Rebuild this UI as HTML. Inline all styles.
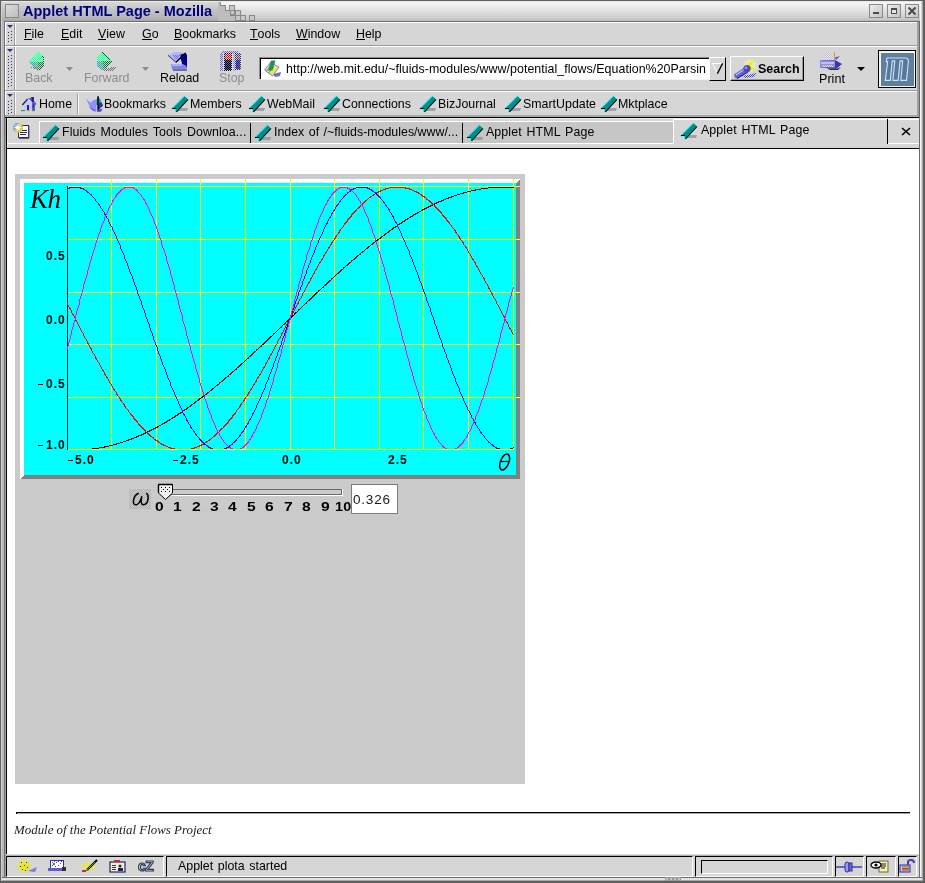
<!DOCTYPE html>
<html><head><meta charset="utf-8">
<style>
*{box-sizing:border-box}
html,body{margin:0;padding:0}
body{width:925px;height:883px;position:relative;overflow:hidden;background:#c8c8c8;font-family:"Liberation Sans",sans-serif;font-size:12px;color:#000}
.a{position:absolute}
.t{position:absolute;white-space:nowrap;line-height:1;will-change:transform}
u{text-decoration:none;border-bottom:1px solid #000;display:inline-block;line-height:10px;vertical-align:top;margin-top:1px}
</style></head><body>
<!-- outer window borders -->
<div class="a" style="left:0;top:0;width:925px;height:1px;background:#606060"></div>
<div class="a" style="left:0;top:0;width:1px;height:883px;background:#606060"></div>
<div class="a" style="left:1px;top:1px;width:923px;height:1px;background:#e8e8e8"></div>
<div class="a" style="left:1px;top:1px;width:1px;height:881px;background:#d0d0d0"></div>
<div class="a" style="left:2px;top:2px;width:918px;height:19px;background:linear-gradient(#f6f6f6,#e4e4e4 40%,#cccccc 85%,#bcbcbc)"></div>
<div class="a" style="left:2px;top:2px;width:218px;height:19px;background:linear-gradient(#d8d8d8,#c4c4c4 40%,#b4b4b4 85%,#a8a8a8)"></div>
<svg class="a" style="left:218px;top:2px" width="40" height="19" viewBox="218 2 40 19" shape-rendering="crispEdges">
<polygon points="218,2 220,2 220,5 225,5 225,10 230,10 230,15 235,15 235,21 218,21" fill="#bdbdbd"/>
<path d="M220.5 2V5.5H225.5V10.5H230.5V15.5H235.5V21" stroke="#888" fill="none"/>
<g fill="#c8c8c8" stroke="#8a8a8a"><rect x="229.5" y="5.5" width="5" height="5"/><rect x="230.5" y="10.5" width="4" height="4"/><rect x="235.5" y="10.5" width="5" height="5"/><rect x="235.5" y="15.5" width="5" height="5"/><rect x="240.5" y="15.5" width="5" height="5"/><rect x="249.5" y="15.5" width="5" height="5"/></g>
</svg>
<div class="a" style="left:2px;top:21px;width:2px;height:856px;background:#b8b8b8"></div>
<div class="a" style="left:4px;top:21px;width:1px;height:856px;background:#707070"></div>
<div class="a" style="left:5px;top:21px;width:1px;height:856px;background:#a0a0a0"></div>
<div class="a" style="left:923px;top:0;width:2px;height:883px;background:#606060"></div>
<div class="a" style="left:919px;top:21px;width:1px;height:856px;background:#6a6a6a"></div>
<div class="a" style="left:920px;top:1px;width:1px;height:877px;background:#f4f4f4"></div>
<div class="a" style="left:921px;top:1px;width:1px;height:877px;background:#d4d4d4"></div>
<div class="a" style="left:922px;top:1px;width:1px;height:880px;background:#a8a8a8"></div>
<div class="a" style="left:0;top:881px;width:925px;height:2px;background:#606060"></div>
<div class="a" style="left:2px;top:877px;width:920px;height:1px;background:#6a6a6a"></div>
<div class="a" style="left:2px;top:878px;width:920px;height:2px;background:#e4e4e4"></div>
<div class="a" style="left:2px;top:880px;width:920px;height:1px;background:#a8a8a8"></div>

<!-- title bar -->
<div class="a" style="left:5px;top:4px;width:14px;height:14px;border:1px solid #888;background:linear-gradient(135deg,#dcdcdc,#bcbcbc)"></div>
<div class="t" style="left:22.5px;top:4px;font-size:14.5px;font-weight:bold;color:#000080">Applet HTML Page - Mozilla</div>
<div class="a" style="left:869px;top:4px;width:14px;height:14px;border:1px solid #8a8a8a;background:linear-gradient(135deg,#ececec,#c4c4c4)"></div>
<div class="a" style="left:887px;top:4px;width:14px;height:14px;border:1px solid #8a8a8a;background:linear-gradient(135deg,#ececec,#c4c4c4)"></div>
<div class="a" style="left:905px;top:4px;width:14px;height:14px;border:1px solid #8a8a8a;background:linear-gradient(135deg,#ececec,#c4c4c4)"></div>
<svg class="a" style="left:864px;top:0" width="61" height="22" viewBox="864 0 61 22" shape-rendering="crispEdges">
<rect x="873" y="12" width="6" height="2" fill="#4a4a4a"/>
<rect x="891" y="8" width="6" height="6" fill="#4a4a4a"/><rect x="892" y="10" width="4" height="3" fill="#e8e8e8"/>
<path d="M908.5 7.5L915.5 14.5M915.5 7.5L908.5 14.5" stroke="#4a4a4a" stroke-width="2" shape-rendering="auto"/>
</svg>
<!-- toolbox background -->
<div class="a" style="left:4px;top:21px;width:915px;height:96px;background:#d6d6d6"></div>
<div class="a" style="left:4px;top:21px;width:916px;height:1px;background:#6c6c6c"></div>
<div class="a" style="left:4px;top:21px;width:1px;height:96px;background:#707070"></div>
<div class="a" style="left:5px;top:22px;width:1px;height:95px;background:#fff"></div>
<div class="a" style="left:14px;top:22px;width:1px;height:95px;background:#9a9a9a"></div>
<div class="a" style="left:15px;top:22px;width:1px;height:95px;background:#fff"></div>
<div class="a" style="left:5px;top:22px;width:913px;height:1px;background:#fff"></div>
<div class="a" style="left:5px;top:45px;width:913px;height:1px;background:#9a9a9a"></div>
<div class="a" style="left:5px;top:46px;width:913px;height:1px;background:#fff"></div>
<div class="a" style="left:5px;top:90px;width:913px;height:1px;background:#9a9a9a"></div>
<div class="a" style="left:5px;top:91px;width:913px;height:1px;background:#fff"></div>
<div class="a" style="left:5px;top:115px;width:913px;height:2px;background:#a8a8a8"></div>
<div class="a" style="left:917px;top:22px;width:2px;height:95px;background:#a0a0a0"></div>
<!-- grippies -->
<svg class="a" style="left:6px;top:23px" width="8" height="92" viewBox="0 0 8 92">
<g fill="#2a2a70">
<path d="M1 2h6l-3 3z"/>
<path d="M1 26h6l-3 3z"/>
<path d="M1 71h6l-3 3z"/>
</g>
<g fill="#303070">
<rect x="5" y="8" width="1" height="1"/><rect x="2" y="9" width="1" height="1"/><rect x="5" y="11" width="1" height="1"/><rect x="2" y="12" width="1" height="1"/><rect x="5" y="14" width="1" height="1"/><rect x="2" y="15" width="1" height="1"/><rect x="5" y="17" width="1" height="1"/><rect x="2" y="18" width="1" height="1"/>
<rect x="5" y="32" width="1" height="1"/><rect x="2" y="33" width="1" height="1"/><rect x="5" y="35" width="1" height="1"/><rect x="2" y="36" width="1" height="1"/><rect x="5" y="38" width="1" height="1"/><rect x="2" y="39" width="1" height="1"/><rect x="5" y="41" width="1" height="1"/><rect x="2" y="42" width="1" height="1"/><rect x="5" y="44" width="1" height="1"/><rect x="2" y="45" width="1" height="1"/><rect x="5" y="47" width="1" height="1"/><rect x="2" y="48" width="1" height="1"/><rect x="5" y="50" width="1" height="1"/><rect x="2" y="51" width="1" height="1"/><rect x="5" y="53" width="1" height="1"/><rect x="2" y="54" width="1" height="1"/><rect x="5" y="56" width="1" height="1"/><rect x="2" y="57" width="1" height="1"/><rect x="5" y="59" width="1" height="1"/><rect x="2" y="60" width="1" height="1"/><rect x="5" y="62" width="1" height="1"/><rect x="2" y="63" width="1" height="1"/>
<rect x="5" y="77" width="1" height="1"/><rect x="2" y="78" width="1" height="1"/><rect x="5" y="80" width="1" height="1"/><rect x="2" y="81" width="1" height="1"/><rect x="5" y="83" width="1" height="1"/><rect x="2" y="84" width="1" height="1"/><rect x="5" y="86" width="1" height="1"/><rect x="2" y="87" width="1" height="1"/><rect x="5" y="89" width="1" height="1"/><rect x="2" y="90" width="1" height="1"/>
</g>
</svg>
<!-- menu items -->
<div class="t" style="left:24px;top:28px;font-size:12.4px"><u>F</u>ile</div>
<div class="t" style="left:61px;top:28px;font-size:12.4px"><u>E</u>dit</div>
<div class="t" style="left:98px;top:28px;font-size:12.4px"><u>V</u>iew</div>
<div class="t" style="left:142px;top:28px;font-size:12.4px"><u>G</u>o</div>
<div class="t" style="left:174px;top:28px;font-size:12.4px"><u>B</u>ookmarks</div>
<div class="t" style="left:250px;top:28px;font-size:12.4px"><u>T</u>ools</div>
<div class="t" style="left:296px;top:28px;font-size:12.4px"><u>W</u>indow</div>
<div class="t" style="left:356px;top:28px;font-size:12.4px"><u>H</u>elp</div>

<!-- nav toolbar -->
<svg width="0" height="0" style="position:absolute"><defs>
<pattern id="chkp" patternUnits="userSpaceOnUse" width="2" height="2"><rect x="0" y="0" width="1" height="1" fill="#fff"/><rect x="1" y="1" width="1" height="1" fill="#fff"/></pattern>
<pattern id="chkq" patternUnits="userSpaceOnUse" width="2" height="2"><rect x="1" y="0" width="1" height="1" fill="#fff"/><rect x="0" y="1" width="1" height="1" fill="#fff"/></pattern>
<mask id="chk" maskUnits="userSpaceOnUse" x="0" y="0" width="925" height="883"><rect x="0" y="0" width="925" height="883" fill="url(#chkp)"/></mask>
<mask id="chk2" maskUnits="userSpaceOnUse" x="0" y="0" width="925" height="883"><rect x="0" y="0" width="925" height="883" fill="url(#chkq)"/></mask>
</defs></svg>
<svg class="a" style="left:24px;top:48px" width="28" height="26" viewBox="24 48 28 26" shape-rendering="crispEdges">
<g mask="url(#chk)">
<polygon points="38.6,51 44,56.8 44,62 28,62" fill="#40ffa0"/>
<polygon points="28,62 38,62 38,71 37.7,70.6" fill="#40a8b8"/>
<polygon points="38,62 44,62 44,66.3 38.7,70.6" fill="#008000"/>
<polygon points="38.6,51 44,56.8 44,66.3 38.7,70.6 39.5,69 43,65.5 43,57.5" fill="#005050"/>
<polygon points="30,67 41,67 38,70" fill="#707070"/>
</g>
<g mask="url(#chk2)"><polygon points="38.6,51 44,56.8 44,62 28,62" fill="#90f8c0"/><polygon points="28,62 38,62 38,71" fill="#a0d0d8"/></g>
</svg>
<svg class="a" style="left:65px;top:66px" width="9" height="6" viewBox="0 0 9 6"><polygon points="1,1 8,1 4.5,5" fill="#8c8c8c"/></svg>
<div class="t" style="left:25px;top:72px;font-size:12.4px;color:#8c8c8c">Back</div>
<svg class="a" style="left:94px;top:48px" width="26" height="26" viewBox="94 48 26 26" shape-rendering="crispEdges">
<g mask="url(#chk)">
<polygon points="102.4,51 113,61.4 97,61.4 97,57.2" fill="#40ffa0"/>
<polygon points="97,61.4 103,61.4 103,70.6 97,66.3" fill="#40a8b8"/>
<polygon points="103,61.4 113,61.4 103.3,70.6" fill="#008000"/>
<polygon points="102.4,51 113,61.4 103.3,70.6 103,69 111.5,61.4 102,52.5" fill="#005050"/>
<polygon points="104,68 116,67 112,71 103,71" fill="#707070"/>
</g>
<g mask="url(#chk2)"><polygon points="102.4,51 113,61.4 97,61.4 97,57.2" fill="#90f8c0"/><polygon points="97,61.4 103,61.4 103,70.6 97,66.3" fill="#a0d0d8"/></g>
</svg>
<svg class="a" style="left:141px;top:66px" width="9" height="6" viewBox="0 0 9 6"><polygon points="1,1 8,1 4.5,5" fill="#8c8c8c"/></svg>
<div class="t" style="left:84px;top:72px;font-size:12.4px;color:#8c8c8c">Forward</div>
<svg class="a" style="left:164px;top:48px" width="32" height="26" viewBox="164 48 32 26">
<polygon points="168,55.3 174.2,52 183,52 176,62.3" fill="#b4b4f8"/>
<g mask="url(#chk)"><polygon points="172,55 182,55 176,60" fill="#7070e0"/></g>
<polyline points="168,55.3 176,62.3 185.5,53" stroke="#3030a0" stroke-width="1" fill="none"/>
<polygon points="180.5,54.5 185.5,53 187,55 187,67.5 183,67.5 180.5,58" fill="#000090"/>
<polygon points="171,64 183,64 186.5,66 186.5,69.5 172,69.5" fill="#8080f0"/>
<rect x="172" y="64" width="10" height="2" fill="#b0b0ff"/>
<rect x="173" y="69.5" width="14" height="1.2" fill="#404060"/>
<path d="M176 62.3L185.5 53" stroke="#000" stroke-width="1.2"/>
</svg>
<div class="t" style="left:160px;top:72px;font-size:12.4px">Reload</div>
<svg class="a" style="left:218px;top:50px" width="24" height="22" viewBox="218 50 24 22" shape-rendering="crispEdges">
<g mask="url(#chk)">
<rect x="222" y="51" width="16" height="2" fill="#6a6ad8"/>
<rect x="220" y="53" width="3" height="18" fill="#6a6ad8"/>
<rect x="224" y="53" width="8" height="18" fill="#000"/>
<rect x="225" y="54" width="6" height="5" fill="#ff0000"/>
<rect x="233" y="53" width="2" height="18" fill="#8a8ae8"/>
<rect x="235" y="53" width="6" height="17" fill="#28287a"/>
<rect x="236" y="55" width="3" height="3" fill="#d00000"/>
</g>
<g mask="url(#chk2)">
<rect x="225" y="60" width="6" height="10" fill="#5050a8"/>
<rect x="236" y="60" width="4" height="9" fill="#6060c0"/>
</g>
</svg>
<div class="t" style="left:219px;top:72px;font-size:12.4px;color:#8c8c8c">Stop</div>
<!-- url box -->
<div class="a" style="left:259px;top:57px;width:450px;height:23px;background:#fff;border-top:1px solid #8c8c8c;border-left:1px solid #8c8c8c;border-bottom:1px solid #f4f4f4"></div>
<div class="a" style="left:260px;top:58px;width:449px;height:1px;background:#000"></div>
<div class="a" style="left:260px;top:58px;width:1px;height:21px;background:#000"></div>
<svg class="a" style="left:262px;top:59px" width="22" height="20" viewBox="262 59 22 20">
<polygon points="273,74 281,72 280,76 275,77" fill="#7070b0"/>
<polygon points="264.5,70 270.5,62.5 279,67 272.5,76" fill="#e8e880" stroke="#7a7af0" stroke-width="1"/>
<path d="M267 70L272 64M269 72L274 66M271 74L276 68" stroke="#f0f000" stroke-width="1.2"/>
<path d="M266.5 71L271.5 65M268.5 73L273.5 67" stroke="#5050c0" stroke-width="0.7"/>
<polygon points="271,60.5 275.5,60.5 272.5,70.5 268,70.5" fill="#209060"/>
</svg>
<div class="t" style="left:286px;top:62px;font-size:12.4px;width:421px;height:16px;overflow:hidden;line-height:14px;letter-spacing:0.05px">http://web.mit.edu/~fluids-modules/www/potential_flows/Equation%20Parsin</div>
<!-- dropdown -->
<div class="a" style="left:709px;top:57px;width:17px;height:24px;background:#d6d6d6;border-top:1px solid #fff;border-left:1px solid #fff;border-right:1px solid #000;border-bottom:1px solid #000"></div>
<svg class="a" style="left:704px;top:52px" width="28" height="32" viewBox="704 52 28 32">
<path d="M712.5 63.5H722M712.5 63.5L717.5 73" stroke="#fff" stroke-width="1" fill="none"/>
<path d="M722.6 63.4L717.4 73.6" stroke="#000" stroke-width="1.3" fill="none"/>
</svg>
<!-- search button -->
<div class="a" style="left:730px;top:56px;width:74px;height:25px;background:#d6d6d6;border-top:1px solid #fff;border-left:1px solid #fff;border-right:1px solid #000;border-bottom:1px solid #000;box-shadow:inset -1px -1px 0 #9a9a9a"></div>
<svg class="a" style="left:730px;top:57px" width="30" height="23" viewBox="730 57 30 23">
<g mask="url(#chk)"><circle cx="750" cy="66" r="6.5" fill="#f8f8a0"/></g>
<polygon points="748,63 754,60 751,66 755,70 749,70" fill="#f0f000"/>
<g mask="url(#chk)"><polygon points="742,76 757,73 754,77 745,78" fill="#4040d0"/></g>
<polygon points="734,74.5 744.5,67.5 748.5,72 738,78.5 735,78" fill="#6060d8"/>
<path d="M736 75L745 69" stroke="#b8b8ff" stroke-width="1.2"/>
<path d="M737 78.5L748 72" stroke="#202070" stroke-width="1"/>
<circle cx="747" cy="68.7" r="3.6" fill="#4848b8"/>
<circle cx="746" cy="67.7" r="1.5" fill="#9090f0"/>
</svg>
<div class="t" style="left:758px;top:63px;font-size:12.5px;font-weight:bold">Search</div>
<!-- print -->
<svg class="a" style="left:814px;top:48px" width="36" height="26" viewBox="814 48 36 26">
<rect x="825" y="52" width="10" height="8" fill="#f8f8c0"/>
<g mask="url(#chk)"><rect x="825" y="52" width="10" height="8" fill="#b0b0f0"/></g>
<rect x="834" y="52" width="1" height="8" fill="#e09040"/>
<polygon points="835,57.5 840,56 836,60" fill="#5050c8"/>
<polygon points="820,60.5 835,60 842,64 836,69 820,67.5" fill="#3838a8"/>
<polygon points="820,60.5 835,60.5 835,67.5 820,67.5" fill="#8c8cf0"/>
<rect x="821" y="62" width="13" height="2" fill="#c0c0ff"/>
<g mask="url(#chk)"><rect x="822" y="65" width="11" height="2" fill="#f0f080"/></g>
<polygon points="827,68 836,69 841,67 838,70 830,70" fill="#303040"/>
</svg>
<div class="t" style="left:819px;top:73px;font-size:12.6px">Print</div>
<svg class="a" style="left:856px;top:66px" width="10" height="6" viewBox="0 0 10 6"><polygon points="1,1 9,1 5,5" fill="#000"/></svg>
<!-- M logo -->
<svg class="a" style="left:876px;top:48px" width="44" height="42" viewBox="876 48 44 42">
<rect x="878" y="50" width="38" height="38" fill="#000"/>
<rect x="879" y="51" width="36" height="36" fill="#f4f4f4"/>
<rect x="881" y="53" width="33" height="33" fill="#5f7f9f"/>
<path d="M887 58H905Q908.5 58 908.4 61.5L906.5 80.4H900.8L902.7 60.9H900.1L898.1 80.4H892.9L894.8 60.9H892.2L890.3 80.4H885.3L887.7 61.6H886.2Z" fill="#587898" stroke="#c8e4ff" stroke-width="1.1"/>
</svg>

<svg width="0" height="0" style="position:absolute">
<defs>
<g id="pen">
<polygon points="9,16 20,16 19,19 10,19" fill="#8a8a8a" opacity=".7"/>
<polygon points="16.5,4 20,7.5 8.5,20 7,20 7,16.5 4,16.5" fill="#008c8c"/>
<polyline points="4,16.5 16.5,4" stroke="#00ffff" stroke-width="1" fill="none"/>
<polyline points="7.5,17 7.5,20" stroke="#00ffff" stroke-width="1" fill="none"/>
<polyline points="20,7.5 8.5,20" stroke="#000" stroke-width="1.1" fill="none"/>
<polyline points="4,16.5 8,16.5" stroke="#000" stroke-width="1.1" fill="none"/>
</g>
</defs>
</svg>
<!-- home -->
<svg class="a" style="left:16px;top:92px" width="24" height="24" viewBox="16 92 24 24">
<polygon points="27.5,98 32,98 36.5,104 35,105.5 35,111 32,111 32,103" fill="#5858d0"/>
<polygon points="31,97 34,97 34,102 31,101" fill="#4040b0"/>
<rect x="32" y="97" width="1.5" height="5" fill="#202070"/>
<polygon points="24,104.5 28.5,100 32,103.5 32,111 24,111" fill="#c8c8ff"/>
<polygon points="22,104.5 27.5,98 28.5,99 23,105.5" fill="#9090e8"/>
<path d="M22.3 105L27.6 99.2" stroke="#202068" stroke-width="1.2"/>
<path d="M28 98.6L32 102.6" stroke="#fff" stroke-width="1"/>
<rect x="27" y="105" width="2" height="5.5" fill="#202090"/>
<rect x="33" y="104.5" width="1" height="3" fill="#303030"/>
<rect x="21" y="110" width="4" height="1.2" fill="#20a040"/>
<rect x="27" y="110" width="2.5" height="1.2" fill="#e09030"/>
<rect x="32" y="110" width="1" height="1.2" fill="#20a040"/><rect x="34" y="110" width="1" height="1.2" fill="#20a040"/>
</svg>
<div class="t" style="left:39px;top:98px;font-size:12.4px">Home</div>
<div class="a" style="left:77px;top:94px;width:1px;height:20px;background:#9a9a9a"></div>
<div class="a" style="left:78px;top:94px;width:1px;height:20px;background:#fff"></div>
<svg class="a" style="left:84px;top:94px" width="20" height="20" viewBox="84 94 20 20">
<polygon points="86,99 88,99.5 91,101.5 93,100.5 95.5,99.5 96.5,100 96.5,111.5 94,111 90,108 88.5,104" fill="#9090f8"/>
<polygon points="86,99 88,99.5 91,101.5 93,100.5 91,102.5 88.5,101" fill="#e0e0ff"/>
<polygon points="89,107 94,109.5 96.5,111.5 93,111" fill="#6060d0"/>
<polygon points="96.5,99.5 98.2,96 100,99.5 101.2,100 98.2,105 96.5,105" fill="#108c8c"/>
<polygon points="98,104 101,101.5 103.2,105.5 99.5,109 98,110.5" fill="#30309a"/>
<path d="M98 96.2V110.5" stroke="#000" stroke-width="1.3"/>
<polygon points="98,110 102.5,108.5 101,111.5 97,112" fill="#4040b0"/>
</svg>
<div class="t" style="left:104px;top:98px;font-size:12.4px">Bookmarks</div>
<svg class="a" style="left:168px;top:92px" width="24" height="24"><use href="#pen"/></svg>
<div class="t" style="left:190px;top:98px;font-size:12.4px">Members</div>
<svg class="a" style="left:245px;top:92px" width="24" height="24"><use href="#pen"/></svg>
<div class="t" style="left:267px;top:98px;font-size:12.4px">WebMail</div>
<svg class="a" style="left:320px;top:92px" width="24" height="24"><use href="#pen"/></svg>
<div class="t" style="left:342px;top:98px;font-size:12.4px">Connections</div>
<svg class="a" style="left:416px;top:92px" width="24" height="24"><use href="#pen"/></svg>
<div class="t" style="left:438px;top:98px;font-size:12.4px">BizJournal</div>
<svg class="a" style="left:501px;top:92px" width="24" height="24"><use href="#pen"/></svg>
<div class="t" style="left:523px;top:98px;font-size:12.4px">SmartUpdate</div>
<svg class="a" style="left:597px;top:92px" width="24" height="24"><use href="#pen"/></svg>
<div class="t" style="left:618px;top:98px;font-size:12.4px">Mktplace</div>

<!-- tab bar -->
<div class="a" style="left:5px;top:117px;width:914px;height:1px;background:#000"></div>
<div class="a" style="left:6px;top:117px;width:1px;height:737px;background:#000"></div>
<div class="a" style="left:7px;top:118px;width:912px;height:30px;background:#d6d6d6"></div>
<div class="a" style="left:6px;top:148px;width:913px;height:1px;background:#000"></div>
<div class="a" style="left:7px;top:118px;width:1px;height:30px;background:#e8e8e8"></div>
<div class="a" style="left:7px;top:118px;width:912px;height:1px;background:#e8e8e8"></div>
<div class="a" style="left:7px;top:143px;width:666px;height:1px;background:#fff"></div>
<div class="a" style="left:887px;top:143px;width:32px;height:1px;background:#fff"></div>
<!-- new tab icon -->
<svg class="a" style="left:10px;top:120px" width="22" height="22" viewBox="10 120 22 22">
<rect x="18.5" y="125.5" width="10" height="12" fill="#fff" stroke="#2a2a60" stroke-width="1"/>
<rect x="28.5" y="126" width="1" height="12" fill="#5a5a80"/>
<rect x="19" y="138" width="10" height="1" fill="#5a5a80"/>
<path d="M20 130.5H27M20 132.5H27M20 134.5H26" stroke="#2a2a70" stroke-width="1"/>
<circle cx="18" cy="127.8" r="5" fill="#e0c840"/>
<path d="M18 122.8A5 5 0 0 0 14.5 131.3L18 127.8Z" fill="#7aa8f0"/>
<circle cx="17.8" cy="127.6" r="1.8" fill="#fff"/>
<path d="M17.8 124V131.2M14.2 127.6H21.4M15.3 125.1L20.3 130.1M20.3 125.1L15.3 130.1" stroke="#fff" stroke-width="0.9"/>
</svg>
<!-- unselected tabs -->
<div class="a" style="left:39px;top:121px;width:634px;height:1px;background:#fff"></div>
<div class="a" style="left:39px;top:121px;width:1px;height:23px;background:#fff"></div>
<div class="a" style="left:40px;top:122px;width:633px;height:21px;background:#c6c6c6"></div>
<div class="a" style="left:250px;top:123px;width:1px;height:20px;background:#000"></div>
<div class="a" style="left:462px;top:123px;width:1px;height:20px;background:#000"></div>
<svg class="a" style="left:39px;top:121px" width="24" height="24"><use href="#pen"/></svg>
<div class="t" style="left:62px;top:126px;font-size:12.4px;word-spacing:1.3px;letter-spacing:0.1px">Fluids Modules Tools Downloa...</div>
<svg class="a" style="left:251px;top:121px" width="24" height="24"><use href="#pen"/></svg>
<div class="t" style="left:274px;top:126px;font-size:12.4px;word-spacing:1px;letter-spacing:0px">Index of /~fluids-modules/www/...</div>
<svg class="a" style="left:463px;top:121px" width="24" height="24"><use href="#pen"/></svg>
<div class="t" style="left:486px;top:126px;font-size:12.4px;word-spacing:1.3px;letter-spacing:0.1px">Applet HTML Page</div>
<!-- selected tab -->
<div class="a" style="left:673px;top:119px;width:214px;height:1px;background:#fff"></div>
<div class="a" style="left:673px;top:119px;width:1px;height:25px;background:#fff"></div>
<div class="a" style="left:674px;top:120px;width:213px;height:27px;background:#d6d6d6"></div>
<div class="a" style="left:887px;top:119px;width:1px;height:25px;background:#000"></div>
<div class="a" style="left:888px;top:119px;width:31px;height:1px;background:#fff"></div>
<svg class="a" style="left:677px;top:119px" width="24" height="24"><use href="#pen"/></svg>
<div class="t" style="left:701px;top:124px;font-size:12.4px;word-spacing:1.3px;letter-spacing:0.1px">Applet HTML Page</div>
<svg class="a" style="left:901px;top:127px" width="10" height="9" viewBox="0 0 10 9"><path d="M1 1L9 8M9 1L1 8" stroke="#000" stroke-width="1.6"/></svg>

<!-- content -->
<div class="a" style="left:7px;top:149px;width:912px;height:705px;background:#fff"></div>
<svg class="a" style="left:15px;top:174px" width="510" height="610" viewBox="15 174 510 610" shape-rendering="crispEdges">
<defs><pattern id="strp" patternUnits="userSpaceOnUse" x="0" y="0" width="4" height="2"><rect x="0" y="0" width="4" height="1" fill="#cdcdcd"/><rect x="0" y="1" width="4" height="1" fill="#c8c8c8"/></pattern><clipPath id="pc"><rect x="67" y="186" width="447" height="264"/></clipPath></defs>
<rect x="15" y="174" width="510" height="610" fill="url(#strp)"/>
<polygon points="20,179 520,179 516,183 24,183 24,475 20,479" fill="#ffffff"/>
<polygon points="520,179 520,479 20,479 24,475 516,475 516,183" fill="#808080"/>
<rect x="24" y="183" width="492" height="292" fill="#00ffff"/>
<g stroke="#ffff00" stroke-width="1">
<path d="M111.5 179V449M156.5 179V449M200.5 179V449M245.5 179V449M290.5 179V449M334.5 179V449M379.5 179V449M423.5 179V449M468.5 179V449M513.5 179V449"/>
<path d="M67 186.5H520M67 239.5H520M67 292.5H520M67 344.5H520M67 397.5H520M67 449.5H514"/>
</g>
<path d="M67.5 186V450" stroke="#000" stroke-width="1"/>
<g clip-path="url(#pc)" shape-rendering="crispEdges">
<path fill="#000000" d="M92 448h1v1h-1zM93 448h1v1h-1zM94 448h1v1h-1zM95 448h1v1h-1zM96 448h1v1h-1zM97 448h1v1h-1zM98 448h1v1h-1zM99 447h1v1h-1zM100 447h1v1h-1zM101 447h1v1h-1zM102 447h1v1h-1zM103 447h1v1h-1zM104 446h1v2h-1zM105 446h1v1h-1zM106 446h1v1h-1zM107 446h1v1h-1zM108 446h1v1h-1zM109 445h1v1h-1zM110 445h1v1h-1zM111 445h1v1h-1zM112 445h1v1h-1zM113 444h1v1h-1zM114 444h1v1h-1zM115 444h1v1h-1zM116 443h1v2h-1zM117 443h1v1h-1zM118 443h1v1h-1zM119 443h1v1h-1zM120 442h1v1h-1zM121 442h1v1h-1zM122 442h1v1h-1zM123 441h1v1h-1zM124 441h1v1h-1zM125 441h1v1h-1zM126 440h1v1h-1zM127 440h1v1h-1zM128 439h1v2h-1zM129 439h1v1h-1zM130 439h1v1h-1zM131 438h1v2h-1zM132 438h1v1h-1zM133 438h1v1h-1zM134 437h1v1h-1zM135 437h1v1h-1zM136 436h1v2h-1zM137 436h1v1h-1zM138 435h1v2h-1zM139 435h1v1h-1zM140 435h1v1h-1zM141 434h1v2h-1zM142 434h1v1h-1zM143 433h1v2h-1zM144 433h1v1h-1zM145 432h1v2h-1zM146 432h1v1h-1zM147 431h1v2h-1zM148 431h1v1h-1zM149 430h1v2h-1zM150 430h1v1h-1zM151 429h1v2h-1zM152 429h1v1h-1zM153 428h1v2h-1zM154 428h1v1h-1zM155 427h1v2h-1zM156 427h1v1h-1zM157 426h1v2h-1zM158 426h1v1h-1zM159 425h1v1h-1zM160 425h1v1h-1zM161 424h1v1h-1zM162 423h1v2h-1zM163 423h1v1h-1zM164 422h1v2h-1zM165 422h1v1h-1zM166 421h1v2h-1zM167 420h1v2h-1zM168 420h1v1h-1zM169 419h1v2h-1zM170 419h1v1h-1zM171 418h1v1h-1zM172 417h1v2h-1zM173 417h1v1h-1zM174 416h1v2h-1zM175 415h1v2h-1zM176 415h1v1h-1zM177 414h1v2h-1zM178 413h1v2h-1zM179 413h1v1h-1zM180 412h1v2h-1zM181 412h1v1h-1zM182 411h1v1h-1zM183 410h1v1h-1zM184 409h1v2h-1zM185 409h1v1h-1zM186 408h1v2h-1zM187 407h1v2h-1zM188 407h1v1h-1zM189 406h1v1h-1zM190 405h1v2h-1zM191 404h1v2h-1zM192 404h1v1h-1zM193 403h1v1h-1zM194 402h1v2h-1zM195 401h1v2h-1zM196 401h1v1h-1zM197 400h1v1h-1zM198 399h1v2h-1zM199 398h1v2h-1zM200 398h1v1h-1zM201 397h1v1h-1zM202 396h1v2h-1zM203 395h1v2h-1zM204 395h1v1h-1zM205 394h1v1h-1zM206 393h1v2h-1zM207 392h1v2h-1zM208 392h1v1h-1zM209 391h1v1h-1zM210 390h1v1h-1zM211 389h1v2h-1zM212 388h1v2h-1zM213 388h1v1h-1zM214 387h1v1h-1zM215 386h1v1h-1zM216 385h1v1h-1zM217 384h1v2h-1zM218 384h1v1h-1zM219 382h1v2h-1zM220 382h1v1h-1zM221 381h1v1h-1zM222 380h1v2h-1zM223 379h1v2h-1zM224 378h1v2h-1zM225 377h1v2h-1zM226 377h1v1h-1zM227 376h1v1h-1zM228 375h1v2h-1zM229 374h1v1h-1zM230 373h1v2h-1zM231 372h1v2h-1zM232 371h1v2h-1zM233 371h1v1h-1zM234 370h1v1h-1zM235 369h1v1h-1zM236 368h1v2h-1zM237 367h1v1h-1zM238 366h1v2h-1zM239 365h1v2h-1zM240 364h1v2h-1zM241 363h1v2h-1zM242 363h1v1h-1zM243 362h1v1h-1zM244 361h1v1h-1zM245 360h1v1h-1zM246 359h1v1h-1zM247 358h1v1h-1zM248 357h1v2h-1zM249 356h1v1h-1zM250 355h1v2h-1zM251 354h1v2h-1zM252 353h1v2h-1zM253 352h1v2h-1zM254 351h1v2h-1zM255 351h1v1h-1zM256 349h1v2h-1zM257 349h1v1h-1zM258 348h1v1h-1zM259 347h1v1h-1zM260 346h1v1h-1zM261 345h1v2h-1zM262 344h1v1h-1zM263 343h1v2h-1zM264 342h1v2h-1zM265 341h1v2h-1zM266 340h1v2h-1zM267 339h1v2h-1zM268 338h1v2h-1zM269 337h1v2h-1zM270 336h1v2h-1zM271 336h1v1h-1zM272 335h1v1h-1zM273 333h1v2h-1zM274 333h1v1h-1zM275 332h1v1h-1zM276 331h1v1h-1zM277 330h1v1h-1zM278 329h1v1h-1zM279 328h1v1h-1zM280 327h1v1h-1zM281 326h1v2h-1zM282 325h1v1h-1zM283 324h1v1h-1zM284 323h1v2h-1zM285 322h1v2h-1zM286 321h1v1h-1zM287 320h1v2h-1zM288 319h1v2h-1zM289 318h1v2h-1zM290 317h1v2h-1zM291 316h1v2h-1zM292 315h1v2h-1zM293 315h1v1h-1zM294 313h1v2h-1zM295 312h1v2h-1zM296 312h1v1h-1zM297 311h1v1h-1zM298 309h1v2h-1zM299 309h1v1h-1zM300 308h1v1h-1zM301 307h1v1h-1zM302 306h1v1h-1zM303 305h1v1h-1zM304 304h1v1h-1zM305 303h1v1h-1zM306 302h1v2h-1zM307 301h1v1h-1zM308 300h1v1h-1zM309 299h1v2h-1zM310 298h1v2h-1zM311 297h1v2h-1zM312 296h1v2h-1zM313 295h1v2h-1zM314 294h1v2h-1zM315 293h1v2h-1zM316 292h1v2h-1zM317 292h1v1h-1zM318 290h1v2h-1zM319 290h1v1h-1zM320 289h1v1h-1zM321 288h1v1h-1zM322 287h1v1h-1zM323 286h1v2h-1zM324 285h1v1h-1zM325 284h1v2h-1zM326 283h1v2h-1zM327 282h1v2h-1zM328 281h1v2h-1zM329 280h1v2h-1zM330 280h1v1h-1zM331 278h1v2h-1zM332 278h1v1h-1zM333 277h1v1h-1zM334 276h1v1h-1zM335 275h1v1h-1zM336 274h1v1h-1zM337 273h1v1h-1zM338 272h1v2h-1zM339 271h1v2h-1zM340 270h1v2h-1zM341 269h1v2h-1zM342 269h1v1h-1zM343 267h1v2h-1zM344 267h1v1h-1zM345 266h1v1h-1zM346 265h1v1h-1zM347 264h1v2h-1zM348 263h1v2h-1zM349 262h1v2h-1zM350 262h1v1h-1zM351 260h1v2h-1zM352 260h1v1h-1zM353 259h1v1h-1zM354 258h1v2h-1zM355 257h1v2h-1zM356 256h1v2h-1zM357 255h1v2h-1zM358 255h1v1h-1zM359 254h1v1h-1zM360 253h1v2h-1zM361 252h1v1h-1zM362 251h1v2h-1zM363 251h1v1h-1zM364 250h1v1h-1zM365 249h1v1h-1zM366 248h1v1h-1zM367 247h1v2h-1zM368 246h1v2h-1zM369 246h1v1h-1zM370 245h1v1h-1zM371 244h1v1h-1zM372 243h1v2h-1zM373 242h1v2h-1zM374 242h1v1h-1zM375 241h1v1h-1zM376 240h1v2h-1zM377 239h1v2h-1zM378 239h1v1h-1zM379 238h1v1h-1zM380 237h1v2h-1zM381 236h1v2h-1zM382 236h1v1h-1zM383 235h1v1h-1zM384 234h1v2h-1zM385 233h1v2h-1zM386 233h1v1h-1zM387 232h1v1h-1zM388 231h1v2h-1zM389 230h1v2h-1zM390 230h1v1h-1zM391 229h1v1h-1zM392 228h1v2h-1zM393 227h1v2h-1zM394 227h1v1h-1zM395 226h1v2h-1zM396 226h1v1h-1zM397 225h1v1h-1zM398 224h1v1h-1zM399 223h1v2h-1zM400 223h1v1h-1zM401 222h1v2h-1zM402 221h1v2h-1zM403 221h1v1h-1zM404 220h1v2h-1zM405 219h1v2h-1zM406 219h1v1h-1zM407 218h1v2h-1zM408 218h1v1h-1zM409 217h1v1h-1zM410 216h1v2h-1zM411 216h1v1h-1zM412 215h1v2h-1zM413 214h1v2h-1zM414 214h1v1h-1zM415 213h1v2h-1zM416 213h1v1h-1zM417 212h1v2h-1zM418 212h1v1h-1zM419 211h1v1h-1zM420 211h1v1h-1zM421 210h1v1h-1zM422 209h1v2h-1zM423 209h1v1h-1zM424 208h1v2h-1zM425 208h1v1h-1zM426 207h1v2h-1zM427 207h1v1h-1zM428 206h1v2h-1zM429 206h1v1h-1zM430 205h1v2h-1zM431 205h1v1h-1zM432 204h1v2h-1zM433 204h1v1h-1zM434 203h1v2h-1zM435 203h1v1h-1zM436 202h1v2h-1zM437 202h1v1h-1zM438 201h1v2h-1zM439 201h1v1h-1zM440 201h1v1h-1zM441 200h1v2h-1zM442 200h1v1h-1zM443 199h1v2h-1zM444 199h1v1h-1zM445 199h1v1h-1zM446 198h1v1h-1zM447 198h1v1h-1zM448 197h1v2h-1zM449 197h1v1h-1zM450 197h1v1h-1zM451 196h1v2h-1zM452 196h1v1h-1zM453 196h1v1h-1zM454 195h1v1h-1zM455 195h1v1h-1zM456 195h1v1h-1zM457 194h1v1h-1zM458 194h1v1h-1zM459 194h1v1h-1zM460 193h1v1h-1zM461 193h1v1h-1zM462 193h1v1h-1zM463 192h1v2h-1zM464 192h1v1h-1zM465 192h1v1h-1zM466 192h1v1h-1zM467 191h1v1h-1zM468 191h1v1h-1zM469 191h1v1h-1zM470 191h1v1h-1zM471 190h1v1h-1zM472 190h1v1h-1zM473 190h1v1h-1zM474 190h1v1h-1zM475 189h1v2h-1zM476 189h1v1h-1zM477 189h1v1h-1zM478 189h1v1h-1zM479 189h1v1h-1zM480 189h1v1h-1zM481 188h1v1h-1zM482 188h1v1h-1zM483 188h1v1h-1zM484 188h1v1h-1zM485 188h1v1h-1zM486 188h1v1h-1zM487 188h1v1h-1zM488 187h1v1h-1zM489 187h1v1h-1zM490 187h1v1h-1zM491 187h1v1h-1zM492 187h1v1h-1zM493 187h1v1h-1zM494 187h1v1h-1zM495 187h1v1h-1zM496 187h1v1h-1zM497 187h1v1h-1zM498 187h1v1h-1zM499 187h1v1h-1zM500 187h1v1h-1zM501 187h1v1h-1zM502 187h1v1h-1zM503 187h1v1h-1zM504 187h1v1h-1zM505 187h1v1h-1zM506 187h1v1h-1zM507 187h1v1h-1zM508 187h1v1h-1zM509 187h1v1h-1zM510 187h1v1h-1zM511 187h1v1h-1zM512 187h1v1h-1zM513 187h1v1h-1z"/>
<path fill="#ff0000" d="M67 302h1v3h-1zM68 305h1v2h-1zM69 307h1v2h-1zM70 308h1v2h-1zM71 310h1v3h-1zM72 313h1v2h-1zM73 314h1v2h-1zM74 316h1v2h-1zM75 318h1v3h-1zM76 320h1v2h-1zM77 322h1v2h-1zM78 324h1v2h-1zM79 326h1v2h-1zM80 328h1v2h-1zM81 330h1v2h-1zM82 332h1v1h-1zM83 333h1v3h-1zM84 336h1v2h-1zM85 338h1v1h-1zM86 339h1v2h-1zM87 341h1v3h-1zM88 343h1v2h-1zM89 345h1v2h-1zM90 347h1v2h-1zM91 348h1v3h-1zM92 351h1v2h-1zM93 353h1v1h-1zM94 354h1v2h-1zM95 356h1v3h-1zM96 358h1v2h-1zM97 360h1v2h-1zM98 362h1v1h-1zM99 363h1v2h-1zM100 365h1v2h-1zM101 367h1v2h-1zM102 369h1v2h-1zM103 370h1v2h-1zM104 372h1v3h-1zM105 374h1v2h-1zM106 376h1v2h-1zM107 377h1v2h-1zM108 379h1v2h-1zM109 381h1v2h-1zM110 383h1v1h-1zM111 384h1v2h-1zM112 386h1v2h-1zM113 388h1v2h-1zM114 389h1v2h-1zM115 391h1v1h-1zM116 392h1v3h-1zM117 394h1v2h-1zM118 396h1v1h-1zM119 397h1v2h-1zM120 398h1v3h-1zM121 400h1v2h-1zM122 402h1v1h-1zM123 403h1v2h-1zM124 404h1v3h-1zM125 406h1v2h-1zM126 408h1v1h-1zM127 409h1v1h-1zM128 410h1v2h-1zM129 412h1v1h-1zM130 413h1v2h-1zM131 414h1v2h-1zM132 415h1v2h-1zM133 416h1v3h-1zM134 418h1v2h-1zM135 419h1v2h-1zM136 420h1v2h-1zM137 421h1v2h-1zM138 423h1v2h-1zM139 424h1v2h-1zM140 425h1v2h-1zM141 426h1v2h-1zM142 427h1v2h-1zM143 428h1v2h-1zM144 429h1v2h-1zM145 430h1v2h-1zM146 432h1v1h-1zM147 432h1v2h-1zM148 433h1v2h-1zM149 434h1v2h-1zM150 435h1v2h-1zM151 436h1v1h-1zM152 437h1v1h-1zM153 437h1v2h-1zM154 439h1v1h-1zM155 439h1v2h-1zM156 440h1v1h-1zM157 440h1v2h-1zM158 441h1v2h-1zM159 442h1v1h-1zM160 443h1v1h-1zM161 443h1v2h-1zM162 444h1v1h-1zM163 444h1v2h-1zM164 445h1v1h-1zM165 445h1v1h-1zM166 446h1v1h-1zM167 446h1v1h-1zM168 447h1v1h-1zM169 447h1v1h-1zM170 447h1v2h-1zM171 448h1v1h-1zM172 448h1v1h-1zM173 448h1v1h-1zM174 448h1v1h-1zM191 448h1v1h-1zM192 448h1v1h-1zM193 448h1v1h-1zM194 447h1v2h-1zM195 447h1v1h-1zM196 447h1v1h-1zM197 446h1v1h-1zM198 446h1v1h-1zM199 445h1v2h-1zM200 445h1v1h-1zM201 444h1v2h-1zM202 444h1v1h-1zM203 443h1v2h-1zM204 443h1v1h-1zM205 442h1v1h-1zM206 441h1v2h-1zM207 441h1v1h-1zM208 440h1v1h-1zM209 439h1v2h-1zM210 439h1v1h-1zM211 438h1v1h-1zM212 437h1v1h-1zM213 436h1v1h-1zM214 435h1v2h-1zM215 434h1v2h-1zM216 433h1v2h-1zM217 432h1v2h-1zM218 432h1v1h-1zM219 430h1v2h-1zM220 429h1v2h-1zM221 428h1v2h-1zM222 428h1v1h-1zM223 426h1v2h-1zM224 425h1v2h-1zM225 424h1v2h-1zM226 423h1v2h-1zM227 422h1v2h-1zM228 420h1v3h-1zM229 419h1v2h-1zM230 418h1v2h-1zM231 417h1v2h-1zM232 415h1v3h-1zM233 414h1v2h-1zM234 413h1v2h-1zM235 412h1v2h-1zM236 410h1v2h-1zM237 409h1v1h-1zM238 408h1v1h-1zM239 406h1v2h-1zM240 404h1v3h-1zM241 403h1v2h-1zM242 402h1v1h-1zM243 400h1v2h-1zM244 398h1v3h-1zM245 397h1v2h-1zM246 396h1v1h-1zM247 394h1v2h-1zM248 392h1v3h-1zM249 391h1v2h-1zM250 389h1v2h-1zM251 388h1v2h-1zM252 386h1v2h-1zM253 384h1v2h-1zM254 383h1v2h-1zM255 381h1v2h-1zM256 379h1v3h-1zM257 377h1v2h-1zM258 376h1v2h-1zM259 374h1v2h-1zM260 373h1v2h-1zM261 371h1v2h-1zM262 369h1v2h-1zM263 367h1v2h-1zM264 366h1v2h-1zM265 363h1v3h-1zM266 362h1v2h-1zM267 360h1v2h-1zM268 358h1v2h-1zM269 356h1v3h-1zM270 354h1v2h-1zM271 353h1v2h-1zM272 351h1v2h-1zM273 349h1v2h-1zM274 347h1v2h-1zM275 345h1v2h-1zM276 344h1v1h-1zM277 341h1v3h-1zM278 339h1v2h-1zM279 338h1v1h-1zM280 336h1v2h-1zM281 333h1v3h-1zM282 332h1v2h-1zM283 330h1v2h-1zM284 328h1v2h-1zM285 326h1v2h-1zM286 324h1v2h-1zM287 322h1v2h-1zM288 321h1v1h-1zM289 319h1v2h-1zM290 316h1v3h-1zM291 315h1v1h-1zM292 313h1v2h-1zM293 311h1v2h-1zM294 309h1v2h-1zM295 307h1v2h-1zM296 305h1v2h-1zM297 303h1v2h-1zM298 301h1v3h-1zM299 299h1v2h-1zM300 298h1v1h-1zM301 296h1v2h-1zM302 293h1v3h-1zM303 292h1v1h-1zM304 290h1v2h-1zM305 288h1v2h-1zM306 286h1v2h-1zM307 284h1v2h-1zM308 282h1v2h-1zM309 281h1v2h-1zM310 278h1v3h-1zM311 277h1v2h-1zM312 275h1v2h-1zM313 273h1v2h-1zM314 271h1v3h-1zM315 269h1v2h-1zM316 268h1v2h-1zM317 266h1v2h-1zM318 264h1v2h-1zM319 262h1v2h-1zM320 261h1v2h-1zM321 259h1v2h-1zM322 258h1v2h-1zM323 255h1v3h-1zM324 254h1v2h-1zM325 252h1v2h-1zM326 251h1v2h-1zM327 249h1v2h-1zM328 247h1v2h-1zM329 246h1v2h-1zM330 244h1v2h-1zM331 242h1v3h-1zM332 241h1v2h-1zM333 240h1v1h-1zM334 238h1v2h-1zM335 236h1v3h-1zM336 235h1v2h-1zM337 234h1v1h-1zM338 232h1v2h-1zM339 230h1v3h-1zM340 229h1v2h-1zM341 228h1v1h-1zM342 227h1v1h-1zM343 225h1v2h-1zM344 223h1v2h-1zM345 222h1v2h-1zM346 221h1v2h-1zM347 219h1v3h-1zM348 218h1v2h-1zM349 217h1v2h-1zM350 216h1v2h-1zM351 214h1v3h-1zM352 213h1v2h-1zM353 212h1v2h-1zM354 211h1v2h-1zM355 210h1v2h-1zM356 209h1v2h-1zM357 208h1v1h-1zM358 207h1v2h-1zM359 206h1v2h-1zM360 205h1v2h-1zM361 204h1v1h-1zM362 203h1v2h-1zM363 202h1v2h-1zM364 201h1v2h-1zM365 200h1v2h-1zM366 200h1v1h-1zM367 199h1v1h-1zM368 198h1v1h-1zM369 197h1v1h-1zM370 196h1v2h-1zM371 196h1v1h-1zM372 195h1v1h-1zM373 194h1v2h-1zM374 194h1v1h-1zM375 193h1v1h-1zM376 192h1v2h-1zM377 192h1v1h-1zM378 191h1v2h-1zM379 191h1v1h-1zM380 190h1v2h-1zM381 190h1v1h-1zM382 190h1v1h-1zM383 189h1v1h-1zM384 189h1v1h-1zM385 188h1v2h-1zM386 188h1v1h-1zM387 188h1v1h-1zM388 188h1v1h-1zM389 187h1v1h-1zM390 187h1v1h-1zM391 187h1v1h-1zM392 187h1v1h-1zM393 187h1v1h-1zM394 187h1v1h-1zM395 187h1v1h-1zM396 187h1v1h-1zM397 187h1v1h-1zM398 187h1v1h-1zM399 187h1v1h-1zM400 187h1v1h-1zM401 187h1v1h-1zM402 187h1v1h-1zM403 187h1v1h-1zM404 187h1v1h-1zM405 187h1v2h-1zM406 188h1v1h-1zM407 188h1v1h-1zM408 188h1v1h-1zM409 188h1v2h-1zM410 189h1v1h-1zM411 189h1v1h-1zM412 190h1v1h-1zM413 190h1v1h-1zM414 191h1v1h-1zM415 191h1v1h-1zM416 191h1v2h-1zM417 192h1v1h-1zM418 192h1v2h-1zM419 193h1v1h-1zM420 194h1v1h-1zM421 194h1v2h-1zM422 195h1v2h-1zM423 196h1v1h-1zM424 196h1v2h-1zM425 197h1v1h-1zM426 198h1v2h-1zM427 199h1v1h-1zM428 200h1v1h-1zM429 200h1v2h-1zM430 201h1v2h-1zM431 202h1v2h-1zM432 203h1v2h-1zM433 204h1v1h-1zM434 205h1v2h-1zM435 206h1v2h-1zM436 207h1v2h-1zM437 208h1v2h-1zM438 209h1v2h-1zM439 210h1v2h-1zM440 211h1v2h-1zM441 212h1v2h-1zM442 214h1v2h-1zM443 215h1v2h-1zM444 216h1v2h-1zM445 217h1v2h-1zM446 218h1v3h-1zM447 220h1v2h-1zM448 221h1v2h-1zM449 222h1v2h-1zM450 224h1v1h-1zM451 225h1v2h-1zM452 227h1v1h-1zM453 228h1v1h-1zM454 229h1v2h-1zM455 230h1v3h-1zM456 232h1v2h-1zM457 234h1v1h-1zM458 235h1v2h-1zM459 236h1v3h-1zM460 238h1v2h-1zM461 240h1v1h-1zM462 241h1v2h-1zM463 242h1v3h-1zM464 245h1v1h-1zM465 246h1v2h-1zM466 247h1v2h-1zM467 249h1v2h-1zM468 251h1v2h-1zM469 253h1v1h-1zM470 254h1v2h-1zM471 256h1v2h-1zM472 258h1v2h-1zM473 259h1v2h-1zM474 261h1v2h-1zM475 262h1v3h-1zM476 265h1v2h-1zM477 266h1v2h-1zM478 268h1v2h-1zM479 270h1v2h-1zM480 272h1v2h-1zM481 274h1v1h-1zM482 275h1v2h-1zM483 277h1v2h-1zM484 278h1v3h-1zM485 281h1v2h-1zM486 283h1v1h-1zM487 284h1v2h-1zM488 286h1v3h-1zM489 288h1v2h-1zM490 290h1v2h-1zM491 292h1v2h-1zM492 293h1v3h-1zM493 296h1v2h-1zM494 298h1v1h-1zM495 299h1v2h-1zM496 301h1v3h-1zM497 304h1v1h-1zM498 305h1v2h-1zM499 307h1v2h-1zM500 309h1v2h-1zM501 311h1v2h-1zM502 313h1v2h-1zM503 315h1v2h-1zM504 316h1v3h-1zM505 319h1v2h-1zM506 321h1v2h-1zM507 322h1v2h-1zM508 324h1v3h-1zM509 327h1v2h-1zM510 328h1v2h-1zM511 330h1v2h-1zM512 332h1v2h-1zM513 334h1v1h-1z"/>
<path fill="#0000ff" d="M67 188h1v2h-1zM68 188h1v1h-1zM69 187h1v2h-1zM70 187h1v1h-1zM71 187h1v1h-1zM72 187h1v1h-1zM73 187h1v1h-1zM74 187h1v1h-1zM75 187h1v1h-1zM76 187h1v1h-1zM77 187h1v1h-1zM78 187h1v1h-1zM79 187h1v1h-1zM80 187h1v2h-1zM81 188h1v1h-1zM82 188h1v1h-1zM83 188h1v2h-1zM84 189h1v1h-1zM85 190h1v1h-1zM86 190h1v2h-1zM87 191h1v2h-1zM88 192h1v1h-1zM89 193h1v1h-1zM90 194h1v1h-1zM91 194h1v2h-1zM92 196h1v1h-1zM93 197h1v1h-1zM94 198h1v1h-1zM95 199h1v2h-1zM96 201h1v1h-1zM97 202h1v1h-1zM98 203h1v2h-1zM99 204h1v2h-1zM100 206h1v2h-1zM101 208h1v1h-1zM102 209h1v2h-1zM103 211h1v1h-1zM104 212h1v3h-1zM105 214h1v2h-1zM106 216h1v2h-1zM107 218h1v1h-1zM108 219h1v3h-1zM109 222h1v2h-1zM110 224h1v2h-1zM111 226h1v1h-1zM112 227h1v3h-1zM113 230h1v2h-1zM114 232h1v2h-1zM115 234h1v2h-1zM116 236h1v3h-1zM117 239h1v2h-1zM118 241h1v2h-1zM119 243h1v2h-1zM120 245h1v4h-1zM121 249h1v2h-1zM122 251h1v2h-1zM123 253h1v2h-1zM124 255h1v4h-1zM125 259h1v2h-1zM126 261h1v2h-1zM127 263h1v3h-1zM128 266h1v3h-1zM129 269h1v3h-1zM130 272h1v2h-1zM131 274h1v2h-1zM132 276h1v3h-1zM133 279h1v3h-1zM134 282h1v3h-1zM135 285h1v2h-1zM136 287h1v3h-1zM137 290h1v4h-1zM138 294h1v2h-1zM139 296h1v3h-1zM140 299h1v2h-1zM141 301h1v4h-1zM142 305h1v3h-1zM143 308h1v2h-1zM144 310h1v3h-1zM145 313h1v4h-1zM146 317h1v2h-1zM147 319h1v3h-1zM148 322h1v2h-1zM149 324h1v4h-1zM150 328h1v3h-1zM151 331h1v2h-1zM152 333h1v3h-1zM153 336h1v4h-1zM154 340h1v2h-1zM155 342h1v3h-1zM156 345h1v2h-1zM157 347h1v4h-1zM158 351h1v3h-1zM159 354h1v2h-1zM160 356h1v3h-1zM161 359h1v3h-1zM162 362h1v3h-1zM163 365h1v2h-1zM164 367h1v2h-1zM165 369h1v3h-1zM166 372h1v3h-1zM167 375h1v3h-1zM168 378h1v2h-1zM169 380h1v2h-1zM170 382h1v4h-1zM171 386h1v2h-1zM172 388h1v2h-1zM173 390h1v2h-1zM174 392h1v3h-1zM175 395h1v2h-1zM176 397h1v2h-1zM177 399h1v2h-1zM178 401h1v3h-1zM179 404h1v2h-1zM180 406h1v2h-1zM181 408h1v2h-1zM182 410h1v3h-1zM183 413h1v2h-1zM184 414h1v2h-1zM185 416h1v2h-1zM186 418h1v3h-1zM187 420h1v2h-1zM188 422h1v2h-1zM189 424h1v1h-1zM190 425h1v3h-1zM191 427h1v2h-1zM192 429h1v1h-1zM193 430h1v2h-1zM194 431h1v2h-1zM195 433h1v2h-1zM196 434h1v2h-1zM197 436h1v1h-1zM198 437h1v1h-1zM199 438h1v2h-1zM200 439h1v2h-1zM201 440h1v2h-1zM202 441h1v2h-1zM203 442h1v2h-1zM204 443h1v2h-1zM205 444h1v1h-1zM206 445h1v1h-1zM207 445h1v2h-1zM208 446h1v2h-1zM209 447h1v1h-1zM210 447h1v2h-1zM211 448h1v1h-1zM212 448h1v1h-1zM224 448h1v1h-1zM225 448h1v1h-1zM226 447h1v2h-1zM227 447h1v1h-1zM228 446h1v2h-1zM229 445h1v2h-1zM230 445h1v1h-1zM231 444h1v1h-1zM232 443h1v2h-1zM233 442h1v1h-1zM234 441h1v2h-1zM235 440h1v2h-1zM236 439h1v2h-1zM237 438h1v1h-1zM238 437h1v1h-1zM239 435h1v2h-1zM240 434h1v2h-1zM241 432h1v2h-1zM242 431h1v2h-1zM243 430h1v2h-1zM244 428h1v2h-1zM245 426h1v2h-1zM246 425h1v2h-1zM247 423h1v2h-1zM248 421h1v3h-1zM249 419h1v2h-1zM250 418h1v2h-1zM251 416h1v2h-1zM252 413h1v3h-1zM253 412h1v2h-1zM254 410h1v2h-1zM255 408h1v2h-1zM256 405h1v3h-1zM257 403h1v2h-1zM258 401h1v2h-1zM259 399h1v2h-1zM260 397h1v2h-1zM261 394h1v3h-1zM262 392h1v2h-1zM263 390h1v2h-1zM264 388h1v2h-1zM265 384h1v4h-1zM266 382h1v2h-1zM267 380h1v2h-1zM268 377h1v3h-1zM269 374h1v3h-1zM270 372h1v2h-1zM271 369h1v3h-1zM272 367h1v2h-1zM273 363h1v4h-1zM274 361h1v2h-1zM275 358h1v3h-1zM276 356h1v2h-1zM277 352h1v4h-1zM278 350h1v2h-1zM279 347h1v3h-1zM280 345h1v2h-1zM281 341h1v4h-1zM282 338h1v3h-1zM283 336h1v2h-1zM284 333h1v3h-1zM285 330h1v3h-1zM286 327h1v3h-1zM287 324h1v3h-1zM288 322h1v2h-1zM289 319h1v3h-1zM290 315h1v4h-1zM291 313h1v2h-1zM292 310h1v3h-1zM293 308h1v2h-1zM294 304h1v4h-1zM295 301h1v3h-1zM296 299h1v2h-1zM297 296h1v3h-1zM298 292h1v4h-1zM299 290h1v2h-1zM300 287h1v3h-1zM301 285h1v2h-1zM302 281h1v4h-1zM303 279h1v2h-1zM304 276h1v3h-1zM305 274h1v2h-1zM306 270h1v4h-1zM307 268h1v2h-1zM308 265h1v3h-1zM309 263h1v2h-1zM310 260h1v3h-1zM311 257h1v3h-1zM312 255h1v2h-1zM313 253h1v2h-1zM314 250h1v3h-1zM315 247h1v3h-1zM316 245h1v2h-1zM317 243h1v2h-1zM318 240h1v3h-1zM319 238h1v2h-1zM320 236h1v2h-1zM321 234h1v2h-1zM322 232h1v2h-1zM323 229h1v3h-1zM324 227h1v2h-1zM325 225h1v2h-1zM326 223h1v2h-1zM327 221h1v3h-1zM328 219h1v2h-1zM329 217h1v2h-1zM330 216h1v2h-1zM331 213h1v3h-1zM332 212h1v2h-1zM333 210h1v2h-1zM334 209h1v2h-1zM335 207h1v2h-1zM336 205h1v2h-1zM337 204h1v2h-1zM338 203h1v2h-1zM339 201h1v2h-1zM340 200h1v2h-1zM341 199h1v1h-1zM342 198h1v1h-1zM343 196h1v2h-1zM344 195h1v2h-1zM345 194h1v2h-1zM346 194h1v1h-1zM347 192h1v2h-1zM348 192h1v1h-1zM349 191h1v1h-1zM350 190h1v2h-1zM351 189h1v2h-1zM352 189h1v1h-1zM353 188h1v2h-1zM354 188h1v1h-1zM355 188h1v1h-1zM356 187h1v1h-1zM357 187h1v1h-1zM358 187h1v1h-1zM359 187h1v1h-1zM360 187h1v1h-1zM361 187h1v1h-1zM362 187h1v1h-1zM363 187h1v1h-1zM364 187h1v1h-1zM365 187h1v1h-1zM366 187h1v1h-1zM367 187h1v2h-1zM368 188h1v1h-1zM369 188h1v2h-1zM370 189h1v1h-1zM371 189h1v2h-1zM372 190h1v2h-1zM373 191h1v1h-1zM374 192h1v1h-1zM375 192h1v2h-1zM376 193h1v2h-1zM377 194h1v2h-1zM378 195h1v2h-1zM379 196h1v2h-1zM380 197h1v2h-1zM381 199h1v1h-1zM382 200h1v1h-1zM383 201h1v2h-1zM384 202h1v2h-1zM385 204h1v2h-1zM386 205h1v2h-1zM387 207h1v1h-1zM388 208h1v2h-1zM389 209h1v3h-1zM390 212h1v1h-1zM391 213h1v2h-1zM392 215h1v2h-1zM393 216h1v3h-1zM394 219h1v2h-1zM395 221h1v2h-1zM396 222h1v2h-1zM397 224h1v3h-1zM398 227h1v2h-1zM399 229h1v2h-1zM400 231h1v2h-1zM401 233h1v3h-1zM402 236h1v2h-1zM403 238h1v2h-1zM404 240h1v2h-1zM405 242h1v3h-1zM406 245h1v2h-1zM407 247h1v2h-1zM408 249h1v2h-1zM409 251h1v4h-1zM410 255h1v2h-1zM411 257h1v2h-1zM412 259h1v3h-1zM413 262h1v3h-1zM414 265h1v2h-1zM415 267h1v3h-1zM416 270h1v2h-1zM417 272h1v3h-1zM418 275h1v3h-1zM419 278h1v3h-1zM420 281h1v2h-1zM421 283h1v3h-1zM422 286h1v3h-1zM423 289h1v3h-1zM424 292h1v2h-1zM425 294h1v3h-1zM426 297h1v4h-1zM427 301h1v2h-1zM428 303h1v3h-1zM429 306h1v2h-1zM430 308h1v4h-1zM431 312h1v3h-1zM432 315h1v2h-1zM433 317h1v3h-1zM434 320h1v4h-1zM435 324h1v2h-1zM436 326h1v3h-1zM437 329h1v3h-1zM438 332h1v3h-1zM439 335h1v3h-1zM440 338h1v2h-1zM441 340h1v3h-1zM442 343h1v4h-1zM443 347h1v2h-1zM444 349h1v3h-1zM445 352h1v2h-1zM446 354h1v4h-1zM447 358h1v2h-1zM448 360h1v3h-1zM449 363h1v2h-1zM450 365h1v3h-1zM451 368h1v3h-1zM452 371h1v3h-1zM453 374h1v2h-1zM454 376h1v2h-1zM455 378h1v4h-1zM456 382h1v2h-1zM457 384h1v2h-1zM458 386h1v2h-1zM459 388h1v4h-1zM460 392h1v2h-1zM461 394h1v2h-1zM462 396h1v2h-1zM463 398h1v3h-1zM464 401h1v2h-1zM465 403h1v2h-1zM466 405h1v2h-1zM467 407h1v3h-1zM468 410h1v1h-1zM469 411h1v2h-1zM470 413h1v2h-1zM471 415h1v3h-1zM472 418h1v1h-1zM473 419h1v2h-1zM474 421h1v2h-1zM475 422h1v3h-1zM476 425h1v1h-1zM477 426h1v2h-1zM478 428h1v1h-1zM479 429h1v2h-1zM480 431h1v2h-1zM481 432h1v2h-1zM482 434h1v1h-1zM483 435h1v1h-1zM484 436h1v2h-1zM485 438h1v1h-1zM486 439h1v1h-1zM487 440h1v1h-1zM488 441h1v2h-1zM489 442h1v1h-1zM490 443h1v1h-1zM491 444h1v1h-1zM492 444h1v2h-1zM493 445h1v2h-1zM494 446h1v1h-1zM495 447h1v1h-1zM496 447h1v2h-1zM497 448h1v1h-1zM498 448h1v1h-1zM499 448h1v1h-1zM510 448h1v1h-1zM511 448h1v1h-1zM512 448h1v1h-1zM513 447h1v1h-1z"/>
<path fill="#ff00ff" d="M67 346h1v4h-1zM68 342h1v4h-1zM69 339h1v3h-1zM70 335h1v4h-1zM71 330h1v5h-1zM72 327h1v3h-1zM73 323h1v4h-1zM74 320h1v3h-1zM75 315h1v5h-1zM76 311h1v4h-1zM77 308h1v3h-1zM78 305h1v3h-1zM79 299h1v6h-1zM80 296h1v3h-1zM81 293h1v3h-1zM82 289h1v4h-1zM83 284h1v5h-1zM84 281h1v3h-1zM85 278h1v3h-1zM86 275h1v3h-1zM87 270h1v5h-1zM88 267h1v3h-1zM89 263h1v4h-1zM90 260h1v3h-1zM91 256h1v4h-1zM92 253h1v3h-1zM93 250h1v3h-1zM94 247h1v3h-1zM95 243h1v4h-1zM96 240h1v3h-1zM97 237h1v3h-1zM98 234h1v3h-1zM99 232h1v2h-1zM100 228h1v4h-1zM101 225h1v3h-1zM102 223h1v2h-1zM103 221h1v2h-1zM104 217h1v4h-1zM105 215h1v2h-1zM106 213h1v2h-1zM107 211h1v2h-1zM108 208h1v3h-1zM109 206h1v2h-1zM110 205h1v1h-1zM111 203h1v2h-1zM112 200h1v3h-1zM113 199h1v2h-1zM114 198h1v1h-1zM115 196h1v2h-1zM116 194h1v3h-1zM117 193h1v2h-1zM118 192h1v2h-1zM119 191h1v2h-1zM120 190h1v2h-1zM121 189h1v2h-1zM122 189h1v1h-1zM123 188h1v1h-1zM124 187h1v2h-1zM125 187h1v1h-1zM126 187h1v1h-1zM127 187h1v1h-1zM128 187h1v1h-1zM129 187h1v1h-1zM130 187h1v1h-1zM131 187h1v1h-1zM132 187h1v1h-1zM133 187h1v2h-1zM134 188h1v1h-1zM135 189h1v1h-1zM136 189h1v2h-1zM137 190h1v2h-1zM138 192h1v1h-1zM139 193h1v1h-1zM140 194h1v1h-1zM141 195h1v2h-1zM142 197h1v1h-1zM143 198h1v2h-1zM144 199h1v2h-1zM145 201h1v3h-1zM146 203h1v2h-1zM147 205h1v2h-1zM148 207h1v2h-1zM149 209h1v3h-1zM150 212h1v2h-1zM151 214h1v2h-1zM152 216h1v2h-1zM153 218h1v3h-1zM154 221h1v3h-1zM155 224h1v2h-1zM156 226h1v3h-1zM157 229h1v3h-1zM158 232h1v3h-1zM159 235h1v3h-1zM160 238h1v2h-1zM161 240h1v5h-1zM162 245h1v3h-1zM163 248h1v2h-1zM164 250h1v3h-1zM165 253h1v3h-1zM166 256h1v5h-1zM167 261h1v3h-1zM168 264h1v3h-1zM169 267h1v3h-1zM170 270h1v5h-1zM171 275h1v3h-1zM172 278h1v4h-1zM173 282h1v3h-1zM174 285h1v5h-1zM175 290h1v3h-1zM176 293h1v4h-1zM177 297h1v3h-1zM178 300h1v5h-1zM179 305h1v4h-1zM180 309h1v3h-1zM181 312h1v3h-1zM182 315h1v6h-1zM183 321h1v3h-1zM184 324h1v3h-1zM185 327h1v4h-1zM186 331h1v5h-1zM187 336h1v3h-1zM188 339h1v4h-1zM189 343h1v3h-1zM190 346h1v5h-1zM191 351h1v3h-1zM192 354h1v4h-1zM193 358h1v3h-1zM194 361h1v3h-1zM195 364h1v5h-1zM196 369h1v3h-1zM197 372h1v3h-1zM198 375h1v3h-1zM199 378h1v5h-1zM200 383h1v3h-1zM201 386h1v3h-1zM202 389h1v3h-1zM203 392h1v4h-1zM204 396h1v3h-1zM205 399h1v2h-1zM206 401h1v3h-1zM207 404h1v4h-1zM208 408h1v2h-1zM209 410h1v3h-1zM210 413h1v2h-1zM211 415h1v4h-1zM212 419h1v2h-1zM213 421h1v2h-1zM214 423h1v2h-1zM215 425h1v3h-1zM216 428h1v2h-1zM217 430h1v2h-1zM218 432h1v1h-1zM219 433h1v3h-1zM220 436h1v1h-1zM221 437h1v2h-1zM222 439h1v1h-1zM223 440h1v2h-1zM224 442h1v1h-1zM225 443h1v1h-1zM226 444h1v1h-1zM227 445h1v1h-1zM228 446h1v1h-1zM229 447h1v1h-1zM230 447h1v2h-1zM231 448h1v1h-1zM232 448h1v1h-1zM240 448h1v1h-1zM241 448h1v1h-1zM242 447h1v1h-1zM243 446h1v2h-1zM244 445h1v2h-1zM245 444h1v2h-1zM246 443h1v2h-1zM247 442h1v2h-1zM248 441h1v2h-1zM249 439h1v2h-1zM250 438h1v2h-1zM251 436h1v2h-1zM252 434h1v3h-1zM253 432h1v2h-1zM254 431h1v2h-1zM255 429h1v2h-1zM256 426h1v3h-1zM257 424h1v2h-1zM258 422h1v2h-1zM259 420h1v2h-1zM260 418h1v2h-1zM261 414h1v4h-1zM262 412h1v2h-1zM263 409h1v3h-1zM264 407h1v2h-1zM265 403h1v4h-1zM266 400h1v3h-1zM267 398h1v2h-1zM268 395h1v3h-1zM269 391h1v4h-1zM270 388h1v3h-1zM271 385h1v3h-1zM272 382h1v3h-1zM273 377h1v5h-1zM274 374h1v3h-1zM275 371h1v3h-1zM276 368h1v3h-1zM277 363h1v5h-1zM278 360h1v3h-1zM279 357h1v3h-1zM280 354h1v3h-1zM281 349h1v5h-1zM282 345h1v4h-1zM283 342h1v3h-1zM284 338h1v4h-1zM285 333h1v5h-1zM286 330h1v3h-1zM287 327h1v3h-1zM288 323h1v4h-1zM289 320h1v3h-1zM290 315h1v5h-1zM291 311h1v4h-1zM292 308h1v3h-1zM293 304h1v4h-1zM294 299h1v5h-1zM295 296h1v3h-1zM296 292h1v4h-1zM297 289h1v3h-1zM298 284h1v5h-1zM299 281h1v3h-1zM300 278h1v3h-1zM301 274h1v4h-1zM302 269h1v5h-1zM303 266h1v3h-1zM304 263h1v3h-1zM305 260h1v3h-1zM306 255h1v5h-1zM307 252h1v3h-1zM308 250h1v2h-1zM309 247h1v3h-1zM310 242h1v5h-1zM311 240h1v2h-1zM312 237h1v3h-1zM313 234h1v3h-1zM314 230h1v4h-1zM315 228h1v2h-1zM316 225h1v3h-1zM317 223h1v2h-1zM318 219h1v4h-1zM319 217h1v2h-1zM320 215h1v2h-1zM321 213h1v2h-1zM322 211h1v2h-1zM323 208h1v3h-1zM324 206h1v2h-1zM325 204h1v2h-1zM326 203h1v2h-1zM327 200h1v3h-1zM328 199h1v2h-1zM329 197h1v2h-1zM330 196h1v2h-1zM331 194h1v2h-1zM332 193h1v2h-1zM333 192h1v2h-1zM334 191h1v2h-1zM335 190h1v2h-1zM336 189h1v2h-1zM337 189h1v1h-1zM338 188h1v1h-1zM339 187h1v2h-1zM340 187h1v1h-1zM341 187h1v1h-1zM342 187h1v1h-1zM343 187h1v1h-1zM344 187h1v1h-1zM345 187h1v1h-1zM346 187h1v1h-1zM347 187h1v2h-1zM348 188h1v1h-1zM349 188h1v2h-1zM350 189h1v1h-1zM351 190h1v1h-1zM352 191h1v1h-1zM353 192h1v1h-1zM354 193h1v1h-1zM355 194h1v1h-1zM356 195h1v2h-1zM357 197h1v1h-1zM358 198h1v2h-1zM359 200h1v1h-1zM360 201h1v3h-1zM361 204h1v1h-1zM362 205h1v2h-1zM363 207h1v2h-1zM364 209h1v3h-1zM365 212h1v2h-1zM366 214h1v2h-1zM367 216h1v2h-1zM368 218h1v4h-1zM369 222h1v2h-1zM370 224h1v2h-1zM371 226h1v3h-1zM372 229h1v4h-1zM373 233h1v2h-1zM374 235h1v3h-1zM375 238h1v3h-1zM376 241h1v4h-1zM377 245h1v3h-1zM378 248h1v3h-1zM379 251h1v3h-1zM380 254h1v4h-1zM381 258h1v3h-1zM382 261h1v3h-1zM383 264h1v3h-1zM384 267h1v5h-1zM385 272h1v3h-1zM386 275h1v4h-1zM387 279h1v3h-1zM388 282h1v3h-1zM389 285h1v5h-1zM390 290h1v4h-1zM391 294h1v3h-1zM392 297h1v3h-1zM393 300h1v5h-1zM394 305h1v4h-1zM395 309h1v3h-1zM396 312h1v4h-1zM397 316h1v5h-1zM398 321h1v3h-1zM399 324h1v4h-1zM400 328h1v3h-1zM401 331h1v5h-1zM402 336h1v4h-1zM403 340h1v3h-1zM404 343h1v3h-1zM405 346h1v5h-1zM406 351h1v4h-1zM407 355h1v3h-1zM408 358h1v3h-1zM409 361h1v5h-1zM410 366h1v3h-1zM411 369h1v3h-1zM412 372h1v4h-1zM413 376h1v4h-1zM414 380h1v3h-1zM415 383h1v3h-1zM416 386h1v3h-1zM417 389h1v3h-1zM418 392h1v4h-1zM419 396h1v3h-1zM420 399h1v3h-1zM421 402h1v2h-1zM422 404h1v4h-1zM423 408h1v3h-1zM424 411h1v2h-1zM425 413h1v2h-1zM426 415h1v4h-1zM427 419h1v2h-1zM428 421h1v2h-1zM429 423h1v2h-1zM430 425h1v3h-1zM431 428h1v2h-1zM432 430h1v2h-1zM433 432h1v2h-1zM434 433h1v3h-1zM435 436h1v2h-1zM436 437h1v2h-1zM437 439h1v1h-1zM438 440h1v2h-1zM439 442h1v1h-1zM440 443h1v1h-1zM441 444h1v1h-1zM442 445h1v2h-1zM443 446h1v2h-1zM444 447h1v1h-1zM445 448h1v1h-1zM446 448h1v1h-1zM455 448h1v1h-1zM456 448h1v1h-1zM457 447h1v1h-1zM458 446h1v2h-1zM459 445h1v2h-1zM460 444h1v2h-1zM461 443h1v2h-1zM462 442h1v2h-1zM463 440h1v3h-1zM464 439h1v2h-1zM465 438h1v1h-1zM466 436h1v2h-1zM467 434h1v3h-1zM468 432h1v2h-1zM469 431h1v1h-1zM470 429h1v2h-1zM471 426h1v3h-1zM472 424h1v2h-1zM473 422h1v2h-1zM474 420h1v2h-1zM475 416h1v4h-1zM476 414h1v2h-1zM477 412h1v2h-1zM478 409h1v3h-1zM479 406h1v3h-1zM480 403h1v3h-1zM481 400h1v3h-1zM482 398h1v2h-1zM483 395h1v3h-1zM484 391h1v4h-1zM485 388h1v3h-1zM486 385h1v3h-1zM487 382h1v3h-1zM488 377h1v5h-1zM489 374h1v3h-1zM490 371h1v3h-1zM491 368h1v3h-1zM492 363h1v5h-1zM493 360h1v3h-1zM494 357h1v3h-1zM495 353h1v4h-1zM496 348h1v5h-1zM497 345h1v3h-1zM498 342h1v3h-1zM499 338h1v4h-1zM500 333h1v5h-1zM501 330h1v3h-1zM502 326h1v4h-1zM503 323h1v3h-1zM504 318h1v5h-1zM505 314h1v4h-1zM506 311h1v3h-1zM507 307h1v4h-1zM508 302h1v5h-1zM509 299h1v3h-1zM510 296h1v3h-1zM511 292h1v4h-1zM512 289h1v3h-1zM513 287h1v2h-1z"/>
</g>
</svg>
<!-- axis labels -->
<div class="t" style="left:29.5px;top:186px;font-family:'Liberation Serif',serif;font-style:italic;font-size:27px;letter-spacing:-0.5px">Kh</div>
<svg class="a" style="left:494px;top:450px" width="20" height="24" viewBox="494 450 20 24">
<ellipse cx="504.6" cy="462" rx="4.2" ry="8.4" transform="rotate(22 504.6 462)" fill="none" stroke="#000" stroke-width="1.5"/>
<path d="M500 461.5H509.3" stroke="#000" stroke-width="1.2"/>
</svg>
<div class="t" style="left:46px;top:250px;font-size:12px;font-weight:bold;letter-spacing:1px">0.5</div>
<div class="t" style="left:46px;top:314px;font-size:12px;font-weight:bold;letter-spacing:1px">0.0</div>
<div class="a" style="left:38px;top:384px;width:5px;height:1px;background:#000"></div>
<div class="t" style="left:46px;top:378px;font-size:12px;font-weight:bold;letter-spacing:1px">0.5</div>
<div class="a" style="left:38px;top:445px;width:5px;height:1px;background:#000"></div>
<div class="t" style="left:46px;top:439px;font-size:12px;font-weight:bold;letter-spacing:1px">1.0</div>
<div class="a" style="left:68px;top:460px;width:5px;height:1px;background:#000"></div>
<div class="t" style="left:75px;top:454px;font-size:12px;font-weight:bold;letter-spacing:1px">5.0</div>
<div class="a" style="left:173px;top:460px;width:5px;height:1px;background:#000"></div>
<div class="t" style="left:180px;top:454px;font-size:12px;font-weight:bold;letter-spacing:1px">2.5</div>
<div class="t" style="left:282px;top:454px;font-size:12px;font-weight:bold;letter-spacing:1px">0.0</div>
<div class="t" style="left:388px;top:454px;font-size:12px;font-weight:bold;letter-spacing:1px">2.5</div>
<!-- slider -->
<svg class="a" style="left:129px;top:489px" width="22" height="20" viewBox="0 0 22 20" shape-rendering="crispEdges"><defs><pattern id="wdith" patternUnits="userSpaceOnUse" width="2" height="2"><rect width="2" height="2" fill="#cccccc"/><rect x="0" y="0" width="1" height="1" fill="#b0b0b0"/><rect x="1" y="1" width="1" height="1" fill="#b0b0b0"/></pattern></defs><rect width="22" height="20" fill="url(#wdith)"/></svg>
<svg class="a" style="left:129px;top:488px" width="22" height="20" viewBox="129 488 22 20">
<path d="M138.8 493.2Q134.2 494.6 133.4 500.8Q133 505 136.4 504.8Q139.6 504.2 141.8 496.4M141.8 496.4Q140 504.6 143.4 504.8Q147.4 504.6 148.1 498.4Q148.5 494.4 146.3 493.2" fill="none" stroke="#000" stroke-width="1.5"/>
</svg>
<div class="a" style="left:172px;top:489px;width:171px;height:7px;background:#fff"></div>
<div class="a" style="left:166px;top:489px;width:176px;height:6px;background:#cccccc;border:1px solid #6a6a6a"></div>
<svg class="a" style="left:156px;top:482px" width="19" height="20" viewBox="156 482 19 20">
<polygon points="158.5,484.5 172.5,484.5 172.5,493 165.5,499.5 158.5,493" fill="#f0f0f0" stroke="#000" stroke-width="1"/>
<path d="M158.5 484.5H172.5M158.5 484.5V493" stroke="#000" stroke-width="1.4"/>
<g fill="#000"><rect x="161" y="487" width="1" height="1"/><rect x="165" y="487" width="1" height="1"/><rect x="169" y="487" width="1" height="1"/><rect x="163" y="489" width="1" height="1"/><rect x="167" y="489" width="1" height="1"/><rect x="161" y="491" width="1" height="1"/><rect x="165" y="491" width="1" height="1"/><rect x="169" y="491" width="1" height="1"/></g>
</svg>
<div class="t" style="left:155px;top:501px;font-size:12px;font-weight:bold;transform:scaleX(1.3);transform-origin:0 0">0</div>
<div class="t" style="left:173px;top:501px;font-size:12px;font-weight:bold;transform:scaleX(1.3);transform-origin:0 0">1</div>
<div class="t" style="left:192px;top:501px;font-size:12px;font-weight:bold;transform:scaleX(1.3);transform-origin:0 0">2</div>
<div class="t" style="left:210px;top:501px;font-size:12px;font-weight:bold;transform:scaleX(1.3);transform-origin:0 0">3</div>
<div class="t" style="left:228px;top:501px;font-size:12px;font-weight:bold;transform:scaleX(1.3);transform-origin:0 0">4</div>
<div class="t" style="left:247px;top:501px;font-size:12px;font-weight:bold;transform:scaleX(1.3);transform-origin:0 0">5</div>
<div class="t" style="left:265px;top:501px;font-size:12px;font-weight:bold;transform:scaleX(1.3);transform-origin:0 0">6</div>
<div class="t" style="left:284px;top:501px;font-size:12px;font-weight:bold;transform:scaleX(1.3);transform-origin:0 0">7</div>
<div class="t" style="left:302px;top:501px;font-size:12px;font-weight:bold;transform:scaleX(1.3);transform-origin:0 0">8</div>
<div class="t" style="left:321px;top:501px;font-size:12px;font-weight:bold;transform:scaleX(1.3);transform-origin:0 0">9</div>
<div class="t" style="left:334.5px;top:501px;font-size:12px;font-weight:bold;letter-spacing:0.3px;transform:scaleX(1.2);transform-origin:0 0">10</div>
<div class="a" style="left:351px;top:484px;width:47px;height:30px;background:#fff;border:1px solid #7c7c7c"></div>
<div class="t" style="left:353px;top:493px;font-size:13.5px;letter-spacing:0.8px;color:#1a1a1a">0.326</div>
<!-- footer -->
<div class="a" style="left:16px;top:812px;width:894px;height:1px;background:#000"></div>
<div class="a" style="left:16px;top:812px;width:1px;height:2px;background:#000"></div>
<div class="a" style="left:17px;top:813px;width:893px;height:1px;background:#a4a4a4"></div>
<div class="t" style="left:14px;top:824px;font-family:'Liberation Serif',serif;font-style:italic;font-size:12.9px;color:#1a1a1a">Module of the Potential Flows Project</div>

<!-- status bar -->
<div class="a" style="left:6px;top:854px;width:913px;height:23px;background:#d6d6d6"></div>
<div class="a" style="left:6px;top:854px;width:913px;height:1px;background:#dcdcdc"></div>
<div class="a" style="left:6px;top:855px;width:913px;height:1px;background:#b0b0b0"></div>
<!-- panels: sunken boxes -->
<div class="a" style="left:6px;top:856px;width:158px;height:21px;border-top:1px solid #000;border-left:1px solid #000;border-bottom:1px solid #fff;border-right:1px solid #fff"></div>
<div class="a" style="left:166px;top:856px;width:527px;height:21px;border-top:1px solid #000;border-left:1px solid #000;border-bottom:1px solid #fff;border-right:1px solid #fff"></div>
<div class="a" style="left:695px;top:856px;width:138px;height:21px;border-top:1px solid #000;border-left:1px solid #000;border-bottom:1px solid #fff;border-right:1px solid #fff"></div>
<div class="a" style="left:701px;top:860px;width:127px;height:14px;border-top:1px solid #000;border-left:1px solid #000;border-bottom:1px solid #fff;border-right:1px solid #fff"></div>
<div class="a" style="left:835px;top:856px;width:29px;height:21px;border-top:1px solid #000;border-left:1px solid #000;border-bottom:1px solid #fff;border-right:1px solid #fff"></div>
<div class="a" style="left:866px;top:856px;width:30px;height:21px;border-top:1px solid #000;border-left:1px solid #000;border-bottom:1px solid #fff;border-right:1px solid #fff"></div>
<div class="a" style="left:898px;top:856px;width:19px;height:21px;border-top:1px solid #000;border-left:1px solid #000;border-bottom:1px solid #fff;border-right:1px solid #fff"></div>
<!-- status icons -->
<svg class="a" style="left:14px;top:858px" width="26" height="16" viewBox="14 858 26 16">
<polygon points="28,871 37,867 35,872" fill="#7a7ad8"/>
<circle cx="24" cy="866" r="4.5" fill="none" stroke="#f0f000" stroke-width="1.6"/>
<path d="M24 859.5V872.5M17 866H31M19.5 861.5L28.5 870.5M28.5 861.5L19.5 870.5" stroke="#e8e800" stroke-width="1.2"/>
<g fill="#2a2a70"><rect x="21" y="862" width="1" height="1"/><rect x="26" y="862" width="1" height="1"/><rect x="20" y="866" width="1" height="1"/><rect x="27" y="867" width="1" height="1"/><rect x="22" y="869" width="1" height="1"/><rect x="25" y="870" width="1" height="1"/><rect x="24" y="865" width="1" height="1"/></g>
</svg>
<svg class="a" style="left:47px;top:859px" width="20" height="14" viewBox="47 859 20 14" shape-rendering="crispEdges">
<rect x="50" y="860" width="13" height="8" fill="#fff" stroke="#3030a0" stroke-width="1"/>
<g fill="#d02020"><rect x="52" y="862" width="1" height="1"/><rect x="56" y="862" width="1" height="1"/><rect x="60" y="863" width="1" height="1"/><rect x="58" y="865" width="1" height="1"/></g>
<g fill="#3030c0"><rect x="54" y="861" width="1" height="1"/><rect x="58" y="861" width="1" height="1"/><rect x="52" y="865" width="1" height="1"/><rect x="61" y="861" width="1" height="1"/><rect x="55" y="866" width="1" height="1"/></g>
<rect x="53" y="863" width="2" height="2" fill="#20a040"/>
<rect x="48" y="868" width="15" height="3" fill="#6060c8"/>
<rect x="62" y="867" width="4" height="4" fill="#303030"/>
</svg>
<svg class="a" style="left:79px;top:859px" width="20" height="14" viewBox="0 0 20 14">
<polygon points="1,6 10,3 18,8 9,12" fill="#f0e060"/>
<path d="M8 11L18 1" stroke="#000" stroke-width="2"/>
<path d="M7 12L16 3" stroke="#20a040" stroke-width="1"/>
<rect x="3" y="11" width="4" height="2" fill="#c03030"/>
</svg>
<svg class="a" style="left:109px;top:860px" width="18" height="13" viewBox="0 0 18 13">
<rect x="1" y="2" width="15" height="10" fill="#f8f0c0" stroke="#202070" stroke-width="1.2"/>
<rect x="5" y="0" width="6" height="2" fill="#c03030"/>
<rect x="3" y="5" width="4" height="1" fill="#303080"/><rect x="3" y="7" width="4" height="1" fill="#303080"/><rect x="3" y="9" width="4" height="1" fill="#303080"/>
<circle cx="11" cy="6" r="1.5" fill="#202060"/><rect x="9" y="8" width="5" height="3" fill="#202060"/>
</svg>
<div class="t" style="left:138px;top:859px;font-size:14px;font-weight:bold;color:#e8e8e8;-webkit-text-stroke:1.2px #2a3a5a;letter-spacing:-0.5px">cZ</div>
<div class="t" style="left:178px;top:860px;font-size:12.4px;word-spacing:1.2px">Applet plota started</div>
<svg class="a" style="left:836px;top:860px" width="27" height="14" viewBox="0 0 27 14">
<path d="M0 7H26" stroke="#4040c0" stroke-width="1.5"/>
<rect x="9" y="2" width="4" height="10" rx="2" fill="#9a9af0" stroke="#3030a0" stroke-width="1"/>
<rect x="13" y="3" width="3" height="8" fill="#6a6ad8" stroke="#3030a0" stroke-width="1"/>
</svg>
<svg class="a" style="left:870px;top:860px" width="20" height="13" viewBox="0 0 20 13">
<rect x="9" y="1" width="9" height="11" fill="#f8f0b0" stroke="#6a6a40" stroke-width="1"/>
<path d="M11 4H16M11 6H16M11 8H15" stroke="#202020" stroke-width="1"/>
<ellipse cx="6" cy="5" rx="5" ry="3" fill="#fff" stroke="#000" stroke-width="1.3"/>
<circle cx="6" cy="5" r="1.6" fill="#000"/>
</svg>
<svg class="a" style="left:899px;top:859px" width="17" height="15" viewBox="0 0 17 15">
<path d="M9 6V3Q9 1 12 1Q15 1 15 4" stroke="#4040c0" stroke-width="2" fill="none"/>
<rect x="1" y="6" width="10" height="7" fill="#c8c8f0" stroke="#4040c0" stroke-width="1.2"/>
<rect x="3" y="7" width="7" height="1.5" fill="#a0a000"/><rect x="3" y="9" width="7" height="1.5" fill="#d02070"/><rect x="3" y="11" width="7" height="1.2" fill="#a0a000"/>
</svg>
<svg class="a" style="left:664px;top:877px" width="20" height="5" viewBox="664 877 20 5" shape-rendering="crispEdges">
<g fill="#c4c4c4" stroke="#9a9a9a" stroke-width="1"><rect x="665.5" y="877.5" width="3" height="3"/><rect x="669.5" y="877.5" width="3" height="3"/><rect x="673.5" y="877.5" width="3" height="3"/><rect x="677.5" y="877.5" width="3" height="3"/></g>
</svg>

</body></html>
